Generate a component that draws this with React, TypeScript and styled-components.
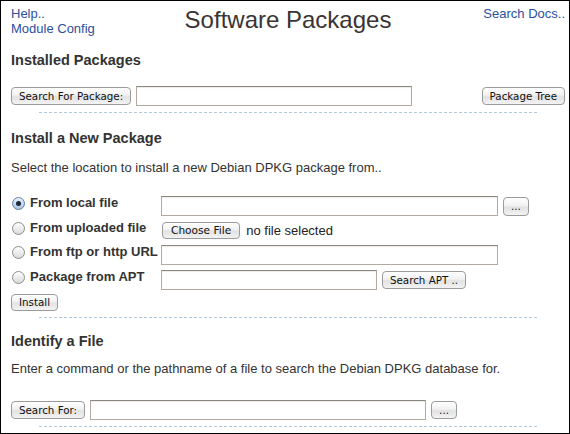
import React from 'react'
import styled, { createGlobalStyle } from 'styled-components'

const GlobalStyle = createGlobalStyle`
  html, body {
    margin: 0;
    padding: 0;
    background: #ffffff;
  }
`

const Frame = styled.div`
  width: 570px;
  height: 434px;
  box-sizing: border-box;
  border: 1px solid #000;
  padding: 7px 4px 0 10px;
  font-family: 'Liberation Sans', Arial, sans-serif;
  color: #333;
  overflow: hidden;
`

const Header = styled.div`
  display: grid;
  grid-template-columns: 1fr auto 1fr;
  align-items: start;
  height: 26px;
`

const LinkColumn = styled.div<{ $right?: boolean }>`
  display: flex;
  flex-direction: column;
  align-items: ${(p) => (p.$right ? 'flex-end' : 'flex-start')};
  margin-top: -1px;
  font-size: 13px;
  line-height: 14.5px;
`

const Link = styled.a`
  color: #2c4f9e;
  text-decoration: none;
`

const Title = styled.h1`
  margin: 0;
  font-size: 24px;
  line-height: 24px;
  font-weight: normal;
  color: #3a3434;
  text-align: center;
`

const SectionTitle = styled.h2<{ $top: number }>`
  margin: ${(p) => p.$top}px 0 0;
  font-size: 14.5px;
  line-height: 17px;
  font-weight: bold;
  color: #333;
`

const Para = styled.p<{ $top: number }>`
  margin: ${(p) => p.$top}px 0 0;
  font-size: 13px;
  line-height: 15px;
  color: #333;
`

const Row = styled.div<{ $top: number }>`
  display: flex;
  align-items: center;
  gap: 5px;
  height: 20px;
  margin-top: ${(p) => p.$top}px;
`

const Button = styled.button<{ $h?: number; $push?: boolean }>`
  height: ${(p) => p.$h ?? 18}px;
  padding: 0 7px;
  box-sizing: border-box;
  border: 1px solid #9b9b9b;
  border-radius: 4px;
  background: linear-gradient(#ffffff, #f1f1f1 45%, #e2e2e2 55%, #f3f3f3);
  font-family: 'DejaVu Sans', sans-serif;
  font-size: 10.3px;
  line-height: 1;
  color: #111;
  white-space: nowrap;
  margin-left: ${(p) => (p.$push ? 'auto' : '0')};
  cursor: default;
`

const TextInput = styled.input<{ $w: number }>`
  width: ${(p) => p.$w}px;
  height: 20px;
  box-sizing: border-box;
  margin: 0;
  padding: 0 3px;
  border: 1px solid #b2aa9f;
  border-top-color: #8d867d;
  background: #fff;
  box-shadow: inset 0 1px 1px rgba(0, 0, 0, 0.08);
  font-family: 'Liberation Sans', sans-serif;
  font-size: 13px;
  outline: none;
`

const Rule = styled.div<{ $top: number }>`
  width: 90%;
  margin: ${(p) => p.$top}px auto 0;
  border-top: 1px dashed #aecadc;
`

const Options = styled.div`
  display: grid;
  grid-template-columns: 150px 1fr;
  grid-auto-rows: 20px;
  row-gap: 4.7px;
  margin-top: 21px;
`

const OptionLabel = styled.label`
  display: flex;
  align-items: flex-start;
  gap: 5px;
  padding-left: 1px;
  margin-top: -1px;
  font-size: 13px;
  line-height: 15px;
  font-weight: bold;
  color: #333;
  white-space: nowrap;
`

const Radio = styled.span<{ $on?: boolean }>`
  position: relative;
  flex: none;
  width: 13px;
  height: 13px;
  margin-top: 2px;
  box-sizing: border-box;
  border-radius: 50%;
  border: 1px solid ${(p) => (p.$on ? '#5f7ea6' : '#8e8e8e')};
  background: ${(p) =>
    p.$on
      ? 'linear-gradient(#e6f0fb, #a9c4e6)'
      : 'linear-gradient(#ffffff, #d9d9d9)'};

  &::after {
    content: '';
    display: ${(p) => (p.$on ? 'block' : 'none')};
    position: absolute;
    left: 3px;
    top: 3px;
    width: 5px;
    height: 5px;
    border-radius: 50%;
    background: #1d2a3a;
  }
`

const OptionField = styled.div`
  display: flex;
  align-items: center;
  gap: 5px;
`

const FileNote = styled.span`
  font-size: 13px;
  color: #222;
  margin-left: 1px;
`

const ChooseButton = styled(Button)`
  margin-left: 1px;
  font-size: 10.6px;
  padding: 0 8px;
`

const InstallButton = styled(Button)`
  display: block;
  margin-top: 4px;
`

const options = [
  { label: 'From local file', on: true },
  { label: 'From uploaded file' },
  { label: 'From ftp or http URL' },
  { label: 'Package from APT' },
]

const App: React.FC = () => {
  return (
    <>
      <GlobalStyle />
      <Frame>
        <Header>
          <LinkColumn>
            <Link href="#">Help..</Link>
            <Link href="#">Module Config</Link>
          </LinkColumn>
          <Title>Software Packages</Title>
          <LinkColumn $right>
            <Link href="#">Search Docs..</Link>
          </LinkColumn>
        </Header>

        <SectionTitle $top={18}>Installed Packages</SectionTitle>
        <Row $top={17}>
          <Button>Search For Package:</Button>
          <TextInput $w={276} />
          <Button $push>Package Tree</Button>
        </Row>
        <Rule $top={6} />

        <SectionTitle $top={17}>Install a New Package</SectionTitle>
        <Para $top={13}>Select the location to install a new Debian DPKG package from..</Para>
        <Options>
          <OptionLabel>
            <Radio $on={options[0].on} />
            {options[0].label}
          </OptionLabel>
          <OptionField>
            <TextInput $w={337} />
            <Button $h={19} style={{ width: 26 }}>...</Button>
          </OptionField>

          <OptionLabel>
            <Radio />
            {options[1].label}
          </OptionLabel>
          <OptionField>
            <ChooseButton $h={17}>Choose File</ChooseButton>
            <FileNote>no file selected</FileNote>
          </OptionField>

          <OptionLabel>
            <Radio />
            {options[2].label}
          </OptionLabel>
          <OptionField>
            <TextInput $w={337} />
          </OptionField>

          <OptionLabel>
            <Radio />
            {options[3].label}
          </OptionLabel>
          <OptionField>
            <TextInput $w={216} />
            <Button>Search APT ..</Button>
          </OptionField>
        </Options>
        <InstallButton $h={17}>Install</InstallButton>
        <Rule $top={6} />

        <SectionTitle $top={15}>Identify a File</SectionTitle>
        <Para $top={11}>Enter a command or the pathname of a file to search the Debian DPKG database for.</Para>
        <Row $top={24}>
          <Button>Search For:</Button>
          <TextInput $w={336} />
          <Button style={{ width: 26 }}>...</Button>
        </Row>
        <Rule $top={6} />
      </Frame>
    </>
  )
}

export default App
